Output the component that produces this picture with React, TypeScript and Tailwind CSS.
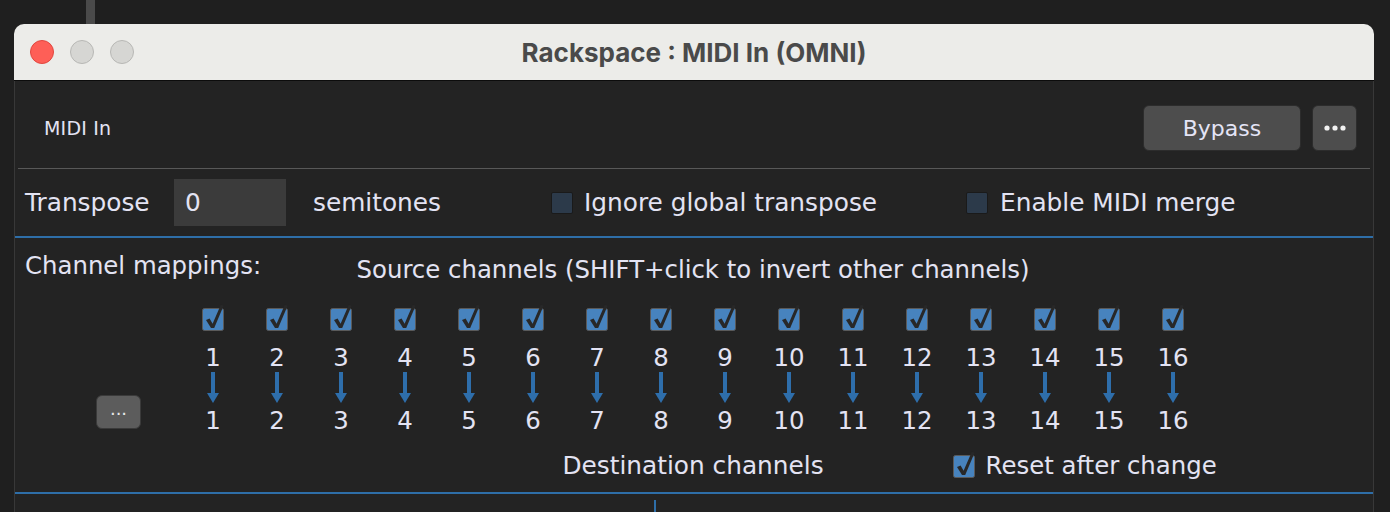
import React from "react";

const channels = Array.from({ length: 16 }, (_, i) => i + 1);

const CheckedBox = () => (
  <svg width="22" height="23" viewBox="0 0 22 23" className="block overflow-visible shrink-0">
    <rect x="0.5" y="0.5" width="21" height="22" rx="2" fill="#4783be" stroke="#5a5a5a" />
    <path d="M4 12 L7.6 10.4 L10.6 15.8 L18.8 -3.2 L21.6 -2.2 L12.2 20 L9 20 Z" fill="#282828" />
  </svg>
);

const EmptyBox = () => (
  <div className="w-[22px] h-[22px] rounded-[2px] bg-[#2c3a4a] border border-[#1a1a1a] shrink-0" />
);

const Arrow = () => (
  <svg width="14" height="31" viewBox="0 0 14 31" className="block">
    <rect x="5" y="0" width="4" height="22" fill="#2e6eab" />
    <path d="M1 21 L13 21 L7 31 Z" fill="#2e6eab" />
  </svg>
);

export default function App() {
  return (
    <div className="w-[1390px] h-[512px] overflow-hidden bg-[#1f1f1f] font-['DejaVu_Sans',sans-serif] text-[#e3e3f3]">
      {/* window behind */}
      <div className="h-[24px] pl-[86px]">
        <div className="w-[9px] h-full bg-[#4a4a4a]" />
      </div>

      <div className="ml-[14px] w-[1360px] rounded-t-[10px] overflow-hidden">
        {/* title bar */}
        <div className="h-[56px] bg-[#ecece9] grid grid-cols-[1fr_auto_1fr] items-center">
          <div className="flex items-center gap-[16px] pl-[16px]">
            <div className="w-[24px] h-[24px] rounded-full bg-[#fe5f57] border border-[#e1473f]" />
            <div className="w-[24px] h-[24px] rounded-full bg-[#d6d6d3] border border-[#b8b8b5]" />
            <div className="w-[24px] h-[24px] rounded-full bg-[#d6d6d3] border border-[#b8b8b5]" />
          </div>
          <div className="font-['Inter',sans-serif] font-bold text-[26px] text-[#4a4a4a]">
            Rackspace : MIDI In (OMNI)
          </div>
          <div />
        </div>
        <div className="h-[1px] bg-[#0c0c0c]" />

        {/* content */}
        <div className="bg-[#232323] border-l border-r border-[#383838]">
          <div className="h-[87px] flex items-center pt-[7px] pl-[29px] pr-[16px]">
            <span className="text-[19px] flex-1 tracking-[0.2px]">MIDI In</span>
            <button className="w-[158px] h-[46px] rounded-[6px] bg-[#4d4d4d] border border-[#2c2c2c] text-[22px] text-[#e4e4f6]">
              Bypass
            </button>
            <button className="ml-[11px] w-[45px] h-[46px] rounded-[6px] bg-[#4d4d4d] border border-[#2c2c2c] flex items-center justify-center">
              <svg width="22" height="6" viewBox="0 0 22 6">
                <circle cx="3" cy="3" r="2.6" fill="#f2f2f2" />
                <circle cx="11" cy="3" r="2.6" fill="#f2f2f2" />
                <circle cx="19" cy="3" r="2.6" fill="#f2f2f2" />
              </svg>
            </button>
          </div>
          <div className="mx-[3px] h-[1px] bg-[#585858]" />

          {/* transpose row */}
          <div className="h-[67px] flex items-center pl-[10px] text-[24.8px]">
            <span className="w-[149px]">Transpose</span>
            <div className="w-[112px] h-[47px] bg-[#3b3b3b] flex items-center pl-[11px]">0</div>
            <span className="ml-[27px] w-[238px]">semitones</span>
            <div className="w-[415px] flex items-center">
              <EmptyBox />
              <span className="ml-[11px]">Ignore global transpose</span>
            </div>
            <div className="flex items-center">
              <EmptyBox />
              <span className="ml-[12px]">Enable MIDI merge</span>
            </div>
          </div>
          <div className="h-[2px] bg-[#2e6ea8]" />

          {/* channel mappings */}
          <div className="pt-[14px] text-[24.4px] leading-[28px]">
            <div className="flex h-[28px]">
              <div className="w-[166px] pl-[10px] whitespace-nowrap">Channel mappings:</div>
              <div className="w-[1024px] flex justify-center pt-[4px] whitespace-nowrap">
                Source channels (SHIFT+click to invert other channels)
              </div>
            </div>

            <div className="flex mt-[28px]">
              <div className="w-[166px] pl-[81px] pt-[85px]">
                <button className="w-[45px] h-[34px] rounded-[6px] bg-[#5c5c5c] border border-[#3a3a3a] text-[18px] leading-none text-[#e8e8e8] pb-[6px]">
                  ...
                </button>
              </div>
              <div className="w-[1024px] grid grid-cols-16">
                {channels.map((c) => (
                  <div key={c} className="flex flex-col items-center">
                    <CheckedBox />
                    <div className="mt-[13px]">{c}</div>
                    <Arrow />
                    <div className="mt-[4px]">{c}</div>
                  </div>
                ))}
              </div>
            </div>

            <div className="flex mt-[17px]">
              <div className="w-[166px]" />
              <div className="w-[1024px] grid grid-cols-[minmax(0,1fr)_auto_minmax(0,1fr)]">
                <div />
                <div className="whitespace-nowrap text-[24.8px]">Destination channels</div>
                <div className="flex items-center pl-[129px] whitespace-nowrap">
                  <CheckedBox />
                  <span className="ml-[11px]">Reset after change</span>
                </div>
              </div>
            </div>
            <div className="h-[12px]" />
          </div>
          <div className="h-[2px] bg-[#2e6ea8]" />
          <div className="h-[30px] pl-[639px] pt-[6px]">
            <div className="w-[2px] h-full bg-[#2e6ea8]" />
          </div>
        </div>
      </div>
    </div>
  );
}
